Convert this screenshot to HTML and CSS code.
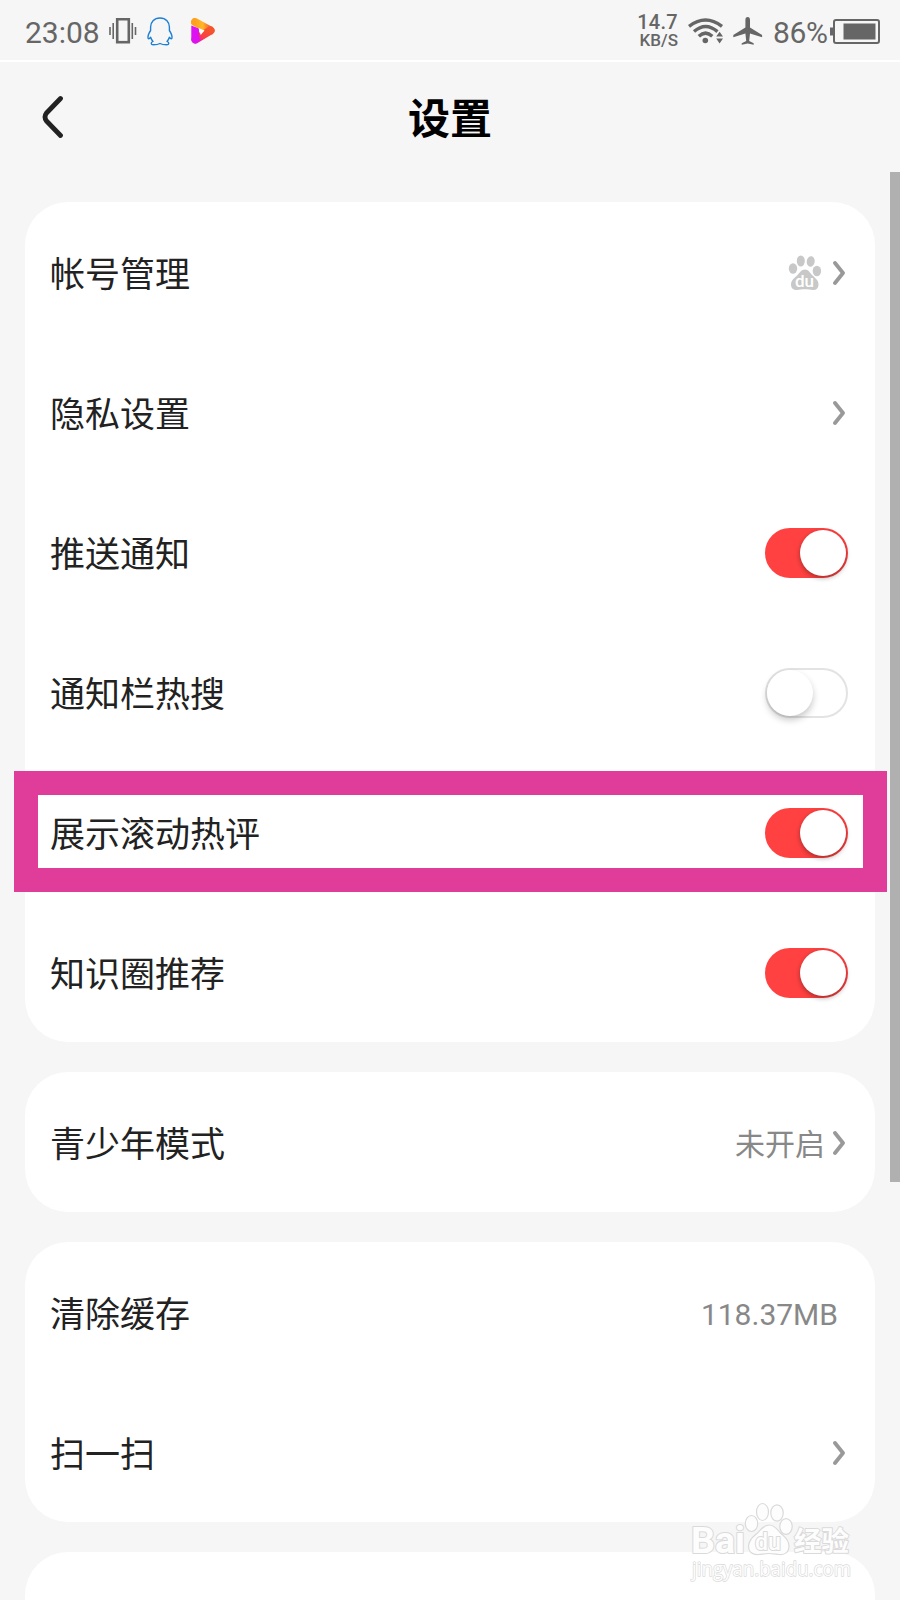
FILE: index.html
```html
<!DOCTYPE html>
<html lang="zh-CN">
<head>
    <meta charset="UTF-8">
    <title>设置</title>
    <link rel="stylesheet" href="styles.css">
</head>
<body>

    <div class="status-bar">
        <span class="time">23:08</span>
        <svg class="icon-vibrate" width="28" height="26" viewBox="0 0 28 26" fill="none" stroke="#666">
            <rect x="8.2" y="1.2" width="11.6" height="23" stroke-width="2.6"/>
            <path d="M1 9v8M4.2 5v16M23.3 5v16M26.5 9v8" stroke-width="1.6"/>
        </svg>
        <svg class="icon-qq" width="26" height="29" viewBox="0 0 26 29" fill="none" stroke="#1b7fd4" stroke-width="1.4" stroke-linejoin="round">
            <path d="M13 1C7 1 3.6 5.2 3.6 10v3.5C2 16 .8 18.500 1 20.500c.1 1.800 1 1.800 2.600-.2.5 1.700 1.300 3 2.400 4.100-2.500 1-2.300 3.400.3 3.400 2.700 0 5-.4 6.700-1.300 1.700.9 4 1.300 6.700 1.300 2.600 0 2.800-2.400.3-3.400 1.100-1.100 1.900-2.400 2.400-4.100 1.600 2 2.500 2 2.600.2.200-2-1-4.500-2.600-7V10C22.400 5.200 19 1 13 1z"/>
        </svg>
        <svg class="icon-player" width="24" height="26" viewBox="0 0 24 26">
            <defs>
                <linearGradient id="gradTop" x1="0" y1="0" x2="1" y2="0">
                    <stop offset="0" stop-color="#ffa11f"/>
                    <stop offset=".5" stop-color="#ffb726"/>
                    <stop offset="1" stop-color="#f4572e"/>
                </linearGradient>
                <linearGradient id="gradRight" x1="1" y1="0" x2="0" y2="1">
                    <stop offset="0" stop-color="#f4552c"/>
                    <stop offset=".6" stop-color="#fa3d48"/>
                    <stop offset="1" stop-color="#ec1bb0"/>
                </linearGradient>
            </defs>
            <path d="M4 4L19.500 12.500" stroke="url(#gradTop)" stroke-width="8" stroke-linecap="round"/>
            <path d="M4.500 21.500L19.500 12.500" stroke="url(#gradRight)" stroke-width="8" stroke-linecap="round"/>
            <path d="M.3 7.500L8 10.500V16l1 6-2.500 2.800C3.800 26.300.3 25 .3 21.500z" fill="#dc13f0"/>
            <path d="M7.500 10l6 2.500-3.800 4.500z" fill="#fff"/>
        </svg>

        <div class="status-right">
            <div class="speed">
                <span class="speed-value">14.7</span>
                <span class="speed-unit">KB/S</span>
            </div>
            <svg class="icon-wifi" width="36" height="26" viewBox="0 0 36 26" fill="none" stroke="#666" stroke-width="3.400">
                <path d="M1 8.300Q17.500-4.500 34 8.300M6 13.600Q17.500 3.400 29.500 13.600M10.800 18.300Q17.500 12 24.300 18.300"/>
                <circle cx="17.300" cy="22.500" r="2.800" fill="#666" stroke="none"/>
                <path d="M28.200 18.600l3.400-4.800 3.400 4.800zM28.200 20.600l3.400 4.800 3.400-4.800z" fill="#666" stroke="none"/>
            </svg>
            <svg class="icon-plane" width="30" height="28" viewBox="0 0 30 28" fill="#666">
                <path d="M14.700 0c-1.500 0-2.300 1.300-2.300 3v7.500L.3 18v2.200l12.100-3.700.8 7.500-4.500 2.200v1.500l6-1.200 6 1.200v-1.500L16.200 24l.8-7.500 12.100 3.700V18L17 10.500V3c0-1.700-.8-3-2.300-3z"/>
            </svg>
            <span class="battery-text">86%</span>
            <svg class="icon-battery" width="50" height="25" viewBox="0 0 50 25">
                <rect x="4" y="1" width="45" height="23" rx="2" fill="none" stroke="#666" stroke-width="2"/>
                <rect x="0" y="8.500" width="4" height="8" fill="#666"/>
                <rect x="13.500" y="4.500" width="32" height="16" fill="#666"/>
            </svg>
        </div>
    </div>

    <header class="header">
        <svg class="back" width="22" height="44" viewBox="0 0 22 44" fill="none" stroke="#222" stroke-width="4.800" stroke-linecap="round" stroke-linejoin="round">
            <path d="M18.500 3.500L4.500 18Q1.500 22 4.500 26L18.500 40.500"/>
        </svg>
        <h1>设置</h1>
    </header>

    <main class="settings">
        <section class="card">
            <div class="row">
                <span class="label">帐号管理</span>
                <svg class="paw" width="34" height="36" viewBox="0 0 34 36" fill="#c8c8c8">
                    <ellipse cx="5" cy="13.500" rx="4.200" ry="5.200"/>
                    <ellipse cx="12.800" cy="6" rx="4" ry="5.500"/>
                    <ellipse cx="22.700" cy="6.500" rx="4" ry="5.300" transform="rotate(8 22.700 6.500)"/>
                    <ellipse cx="28.900" cy="16" rx="4.200" ry="5.200"/>
                    <path d="M17 14.500c-3.500 0-5 3-7.500 5.500S3 25 3 29.500c0 4 2.500 5.500 6 5.500 2.500 0 5-.7 8-.7s5 .7 8 .7c3.500 0 5.500-2 5.500-5.500 0-4.500-3.500-6.500-6.500-9.500-2.500-2.500-3.500-5.500-7-5.500z"/>
                    <text class="paw-text" x="16.500" y="32" text-anchor="middle">du</text>
                </svg>
                <svg class="chevron" width="12" height="24" viewBox="0 0 12 24"><path d="M2 2l8 10-8 10"/></svg>
            </div>
            <div class="row">
                <span class="label">隐私设置</span>
                <svg class="chevron" width="12" height="24" viewBox="0 0 12 24"><path d="M2 2l8 10-8 10"/></svg>
            </div>
            <div class="row">
                <span class="label">推送通知</span>
                <div class="toggle on"><div class="knob"></div></div>
            </div>
            <div class="row">
                <span class="label">通知栏热搜</span>
                <div class="toggle"><div class="knob"></div></div>
            </div>
            <div class="row highlighted">
                <span class="label">展示滚动热评</span>
                <div class="toggle on"><div class="knob"></div></div>
            </div>
            <div class="row">
                <span class="label">知识圈推荐</span>
                <div class="toggle on"><div class="knob"></div></div>
            </div>
        </section>

        <section class="card">
            <div class="row">
                <span class="label">青少年模式</span>
                <span class="value">未开启</span>
                <svg class="chevron" width="12" height="24" viewBox="0 0 12 24"><path d="M2 2l8 10-8 10"/></svg>
            </div>
        </section>

        <section class="card">
            <div class="row">
                <span class="label">清除缓存</span>
                <span class="value size">118.37MB</span>
            </div>
            <div class="row">
                <span class="label">扫一扫</span>
                <svg class="chevron" width="12" height="24" viewBox="0 0 12 24"><path d="M2 2l8 10-8 10"/></svg>
            </div>
        </section>

        <section class="card card-last"></section>
    </main>

    <div class="scrollbar"></div>

    <svg class="watermark" width="175" height="96" viewBox="0 0 175 96">
        <g class="mark">
            <text class="mark-bai" x="1" y="56" textLength="54" lengthAdjust="spacingAndGlyphs">Bai</text>
            <ellipse cx="61.500" cy="26.500" rx="6.200" ry="8"/>
            <ellipse cx="72.500" cy="15" rx="6" ry="8.500"/>
            <ellipse cx="87" cy="16" rx="6.200" ry="8.200"/>
            <ellipse cx="96" cy="29.500" rx="6.200" ry="7.800"/>
            <path d="M79 28c-6 0-8 5-11.500 8S59 42 58.500 49c0 7 5 9 10 8.500 4-.4 7-1 10.500-1s6.500.6 10.500 1c5 .5 9.500-2 9.500-8.500 0-7-5-9.500-8.500-13S85 28 79 28z"/>
            <text class="mark-du" x="65" y="53" textLength="26" lengthAdjust="spacingAndGlyphs">du</text>
            <text class="mark-cn" x="104" y="54" textLength="55" lengthAdjust="spacingAndGlyphs">经验</text>
            <text class="mark-url" x="2" y="79" textLength="159" lengthAdjust="spacingAndGlyphs">jingyan.baidu.com</text>
        </g>
    </svg>

</body>
</html>
```
FILE: styles.css
```css
*,
*::after {
    margin: 0;
    padding: 0;
    box-sizing: border-box;
}

body {
    position: relative;
    width: 900px;
    height: 1600px;
    overflow: hidden;
    background-color: #f6f6f6;
    color: #222;
    font-family: Roboto, "Noto Sans CJK SC", sans-serif;
}

svg {
    display: block;
    flex-shrink: 0;
}

/* Status bar */
.status-bar {
    display: flex;
    align-items: center;
    height: 62px;
    padding: 2px 20px 0 25px;
    border-bottom: 2px solid #fff;
    color: #666;
}

.time {
    width: 74px;
    font-size: 30px;
    line-height: 30px;
    padding-top: 4px;
    white-space: nowrap;
}

.icon-vibrate {
    margin-left: 10px;
}

.icon-qq {
    margin-left: 10px;
}

.icon-player {
    margin-left: 18px;
}

.status-right {
    display: flex;
    align-items: center;
    margin-left: auto;
}

.speed {
    display: flex;
    flex-direction: column;
    align-items: flex-end;
    font-weight: 500;
}

.speed-value {
    font-size: 20px;
    line-height: 18px;
    letter-spacing: 0.3px;
}

.speed-unit {
    font-size: 17px;
    line-height: 18px;
}

.icon-wifi {
    margin-left: 10px;
}

.icon-plane {
    margin-left: 9px;
}

.battery-text {
    width: 58px;
    margin-left: 10px;
    padding-top: 4px;
    font-size: 30px;
    line-height: 30px;
    letter-spacing: -0.4px;
    white-space: nowrap;
}

.icon-battery {
    margin-left: -1px;
}

/* Header */
.header {
    display: grid;
    grid-template-columns: 60px 1fr 60px;
    align-items: center;
    height: 110px;
    padding: 0 41px;
}

.header .back {
    margin-left: 1px;
}

.header h1 {
    padding-top: 6px;
    font-size: 42px;
    font-weight: 700;
    line-height: 60px;
    text-align: center;
    color: #000;
}

/* Cards */
.settings {
    display: flex;
    flex-direction: column;
    gap: 30px;
    padding: 30px 25px 0;
}

.card {
    background-color: #fff;
    border-radius: 43px;
}

/* Only the top of this card fits on the screen */
.card-last {
    height: 48px;
    border-radius: 43px 43px 0 0;
}

.row {
    position: relative;
    display: flex;
    align-items: center;
    height: 140px;
    padding: 2px 30px 0 25px;
}

.label {
    margin-right: auto;
    padding-top: 5px;
    font-size: 35px;
    line-height: 50px;
}

.value {
    margin-right: 8px;
    padding-top: 3px;
    font-size: 30px;
    line-height: 44px;
    color: #888;
}

.value.size {
    margin-right: 7px;
}

.paw {
    margin-right: 11px;
}

.paw-text {
    font: 500 17px Roboto, sans-serif;
    fill: #fff;
}

.chevron {
    fill: none;
    stroke: #999;
    stroke-width: 3.8;
    stroke-linecap: round;
    stroke-linejoin: round;
}

/* Switches */
.toggle {
    width: 83px;
    height: 50px;
    margin-right: -3px;
    border: 2px solid #e3e3e3;
    border-radius: 25px;
    background-color: #fff;
}

.knob {
    width: 46px;
    height: 46px;
    border-radius: 50%;
    background-color: #fff;
    box-shadow: 0 4px 7px rgba(0, 0, 0, 0.22);
}

.toggle.on {
    border-color: #ff4141;
    background-color: #ff4141;
}

.toggle.on .knob {
    margin-left: 32.5px;
    box-shadow: 0 2px 5px rgba(0, 0, 0, 0.35);
}

/* Frame drawn over the selected row */
.highlighted::after {
    content: "";
    position: absolute;
    top: 9px;
    left: -11.5px;
    width: 873.5px;
    height: 121px;
    border: 24px solid #e03d9b;
}

.scrollbar {
    position: absolute;
    top: 172px;
    right: 0;
    width: 10px;
    height: 1010px;
    background-color: #b0b0b0;
}

/* Watermark */
.watermark {
    position: absolute;
    left: 690px;
    top: 1497px;
}

.mark {
    fill: #fdfdfd;
    stroke: #dadada;
    stroke-width: 1.2;
}

.mark text {
    stroke-width: 2;
    stroke-linejoin: round;
    paint-order: stroke;
}

.mark-bai {
    font: 700 36px Roboto, sans-serif;
}

.mark-du {
    font: 500 24px Roboto, sans-serif;
}

.mark-cn {
    font: 700 27px "Noto Sans CJK SC", sans-serif;
}

.mark .mark-url {
    font: 400 20px "Open Sans", sans-serif;
    stroke-width: 1.4;
}
```
